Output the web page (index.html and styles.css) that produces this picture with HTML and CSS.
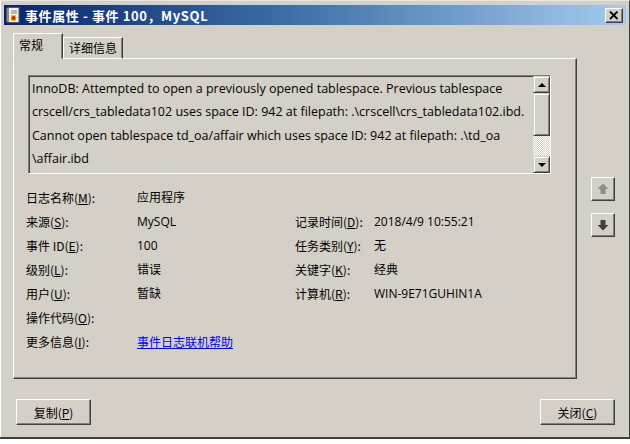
FILE: index.html
```html
<!DOCTYPE html>
<html lang="zh-CN">
<head>
    <meta charset="UTF-8">
    <title>事件属性 - 事件 100，MySQL</title>
    <link rel="stylesheet" href="styles.css">
</head>
<body>
    <div class="window">
        <div class="titlebar">
            <svg class="app-icon" width="16" height="16" viewBox="0 0 16 16">
                <rect x="2" y="0.5" width="11" height="15" fill="#f4f0d8" stroke="#5a5a5a"/>
                <rect x="0.5" y="1" width="2.5" height="14" fill="#8a8a8a"/>
                <line x1="5" y1="4" x2="11" y2="4" stroke="#7a7a9a"/>
                <line x1="5" y1="6" x2="11" y2="6" stroke="#7a7a9a"/>
                <rect x="5" y="8" width="5" height="6" fill="#e8c020"/>
                <circle cx="7.5" cy="11" r="2" fill="#d02020"/>
            </svg>
            <span class="title-text">事件属性 - 事件 100，MySQL</span>
            <button class="close-x">
                <svg width="10" height="9" viewBox="0 0 10 9">
                    <path d="M1 0.5 L8.5 8 M8.5 0.5 L1 8" stroke="#000" stroke-width="1.8"/>
                </svg>
            </button>
        </div>

        <div class="body">
            <div class="main">
                <div class="tabs">
                    <div class="tab active">常规</div>
                    <div class="tab">详细信息</div>
                </div>
                <div class="panel">
                    <div class="message">
                        <div class="message-text">InnoDB: Attempted to open a previously opened tablespace. Previous tablespace crscell/crs_tabledata102 uses space ID: 942 at filepath: .\crscell\crs_tabledata102.ibd. Cannot open tablespace td_oa/affair which uses space ID: 942 at filepath: .\td_oa \affair.ibd</div>
                        <div class="scrollbar">
                            <div class="sb-btn"><span class="tri up"></span></div>
                            <div class="sb-thumb"></div>
                            <div class="sb-track"></div>
                            <div class="sb-btn"><span class="tri down"></span></div>
                        </div>
                    </div>

                    <div class="info">
                        <div class="lbl">日志名称(<u>M</u>):</div>
                        <div class="val">应用程序</div>
                        <div></div><div></div>

                        <div class="lbl">来源(<u>S</u>):</div>
                        <div class="val">MySQL</div>
                        <div class="lbl">记录时间(<u>D</u>):</div>
                        <div class="val">2018/4/9 10:55:21</div>

                        <div class="lbl">事件 ID(<u>E</u>):</div>
                        <div class="val">100</div>
                        <div class="lbl">任务类别(<u>Y</u>):</div>
                        <div class="val">无</div>

                        <div class="lbl">级别(<u>L</u>):</div>
                        <div class="val">错误</div>
                        <div class="lbl">关键字(<u>K</u>):</div>
                        <div class="val">经典</div>

                        <div class="lbl">用户(<u>U</u>):</div>
                        <div class="val">暂缺</div>
                        <div class="lbl">计算机(<u>R</u>):</div>
                        <div class="val">WIN-9E71GUHIN1A</div>

                        <div class="lbl">操作代码(<u>O</u>):</div>
                        <div class="val"></div>
                        <div></div><div></div>

                        <div class="lbl">更多信息(<u>I</u>):</div>
                        <div class="val"><a class="link" href="#">事件日志联机帮助</a></div>
                        <div></div><div></div>
                    </div>
                </div>
            </div>

            <div class="side">
                <button class="nav-btn">
                    <svg width="12" height="12" viewBox="0 0 12 12">
                        <path d="M6 0.5 L11.5 6 L8.5 6 L8.5 11 L3.5 11 L3.5 6 L0.5 6 Z" fill="#8c8c8c"/>
                    </svg>
                </button>
                <button class="nav-btn">
                    <svg width="12" height="12" viewBox="0 0 12 12">
                        <path d="M6 11.5 L11.5 6 L8.5 6 L8.5 1 L3.5 1 L3.5 6 L0.5 6 Z" fill="#404040"/>
                    </svg>
                </button>
            </div>
        </div>

        <div class="footer">
            <button class="btn">复制(<u>P</u>)</button>
            <button class="btn">关闭(<u>C</u>)</button>
        </div>
    </div>
    <div class="under"></div>
</body>
</html>
```

FILE: styles.css
```css
body {
    margin: 0;
    width: 630px;
    height: 444px;
    overflow: hidden;
    background: #d4d0c8;
    font-family: "Open Sans", "Noto Sans CJK SC", sans-serif;
    font-size: 12px;
    color: #000;
}
.window {
    height: 437px;
    padding: 4px 3px 0 3px;
    box-sizing: border-box;
    border-top: 1px solid #e8e6e0;
    border-left: 1px solid #ffffff;
    border-right: 1px solid #404040;
}
.titlebar {
    height: 20px;
    display: flex;
    align-items: center;
    padding: 0 3px 0 2px;
    background: linear-gradient(to right, #0a246a, #3a6ea5 45%, #a6caf0);
    color: #fff;
}
.app-icon {
    margin-right: 3px;
}
.title-text {
    font-family: "Noto Sans CJK SC", sans-serif;
    font-weight: bold;
    font-size: 13px;
    flex: 1;
    letter-spacing: 0.6px;
}
.close-x {
    width: 18px;
    height: 15px;
    padding: 0;
    margin-top: 1px;
    display: flex;
    align-items: center;
    justify-content: center;
    background: #d4d0c8;
    border: 1px solid;
    border-color: #fff #404040 #404040 #fff;
    box-shadow: inset -1px -1px 0 #808080;
}
.body {
    display: flex;
    padding: 8px 0 0 9px;
}
.main {
    width: 564px;
}
.tabs {
    display: flex;
    align-items: flex-end;
    height: 25px;
    position: relative;
    z-index: 1;
}
.tab {
    height: 20px;
    line-height: 20px;
    padding: 0 5px;
    border: 1px solid;
    border-color: #fff #404040 transparent #fff;
    box-shadow: inset -1px 0 0 #808080;
    font-family: "Noto Sans CJK SC", sans-serif;
    margin-bottom: -1px;
}
.tab.active {
    height: 24px;
    line-height: 22px;
    width: 38px;
    padding: 0 5px;
    background: #d4d0c8;
    border-bottom: 1px solid #d4d0c8;
    margin-right: 0;
}
.panel {
    height: 321px;
    box-sizing: border-box;
    border: 1px solid;
    border-color: #fff #404040 #404040 #fff;
    box-shadow: inset -1px -1px 0 #808080;
    padding: 16px 0 0 14px;
}
.message {
    width: 523px;
    height: 99px;
    box-sizing: border-box;
    display: flex;
    border: 1px solid;
    border-color: #808080 #fff #fff #808080;
    box-shadow: inset 1px 1px 0 #404040;
}
.message-text {
    flex: 1;
    padding: 1px 0 0 3px;
    line-height: 23.4px;
    font-size: 12.5px;
    overflow: hidden;
}
.scrollbar {
    width: 17px;
    display: flex;
    flex-direction: column;
}
.sb-btn, .sb-thumb {
    box-sizing: border-box;
    background: #d4d0c8;
    border: 1px solid;
    border-color: #d4d0c8 #404040 #404040 #d4d0c8;
    box-shadow: inset 1px 1px 0 #fff, inset -1px -1px 0 #808080;
}
.sb-btn {
    height: 17px;
    display: flex;
    align-items: center;
    justify-content: center;
}
.sb-thumb {
    height: 43px;
}
.sb-track {
    flex: 1;
    background: repeating-conic-gradient(#ffffff 0 25%, #d4d0c8 0 50%) 0 0 / 2px 2px;
}
.tri {
    width: 0;
    height: 0;
    border-left: 4px solid transparent;
    border-right: 4px solid transparent;
}
.tri.up {
    border-bottom: 4px solid #000;
}
.tri.down {
    border-top: 4px solid #000;
}
.info {
    display: grid;
    grid-template-columns: 111px 158px 79px 1fr;
    grid-auto-rows: 24px;
    margin: 12px 0 0 -2px;
    font-family: "Noto Sans CJK SC", sans-serif;
}
.info div {
    line-height: 24px;
    white-space: nowrap;
}
.val {
    font-family: "Open Sans", "Noto Sans CJK SC", sans-serif;
}
.link {
    color: #0000ff;
    font-family: "Noto Sans CJK SC", sans-serif;
}
.side {
    display: flex;
    flex-direction: column;
    gap: 12px;
    padding: 144px 0 0 14px;
}
.nav-btn {
    width: 24px;
    height: 24px;
    padding: 0;
    display: flex;
    align-items: center;
    justify-content: center;
    background: #d4d0c8;
    border: 1px solid;
    border-color: #fff #404040 #404040 #fff;
    box-shadow: inset -1px -1px 0 #808080;
}
.footer {
    display: flex;
    justify-content: space-between;
    padding: 20px 11px 0 12px;
}
.btn {
    width: 75px;
    height: 26px;
    padding: 0;
    background: #d4d0c8;
    border: 1px solid;
    border-color: #fff #404040 #404040 #fff;
    box-shadow: inset -1px -1px 0 #808080;
    font-family: "Noto Sans CJK SC", sans-serif;
    font-size: 12px;
    color: #000;
}
.under {
    height: 7px;
    border-top: 2px solid #404040;
    background: #fff;
}
```
